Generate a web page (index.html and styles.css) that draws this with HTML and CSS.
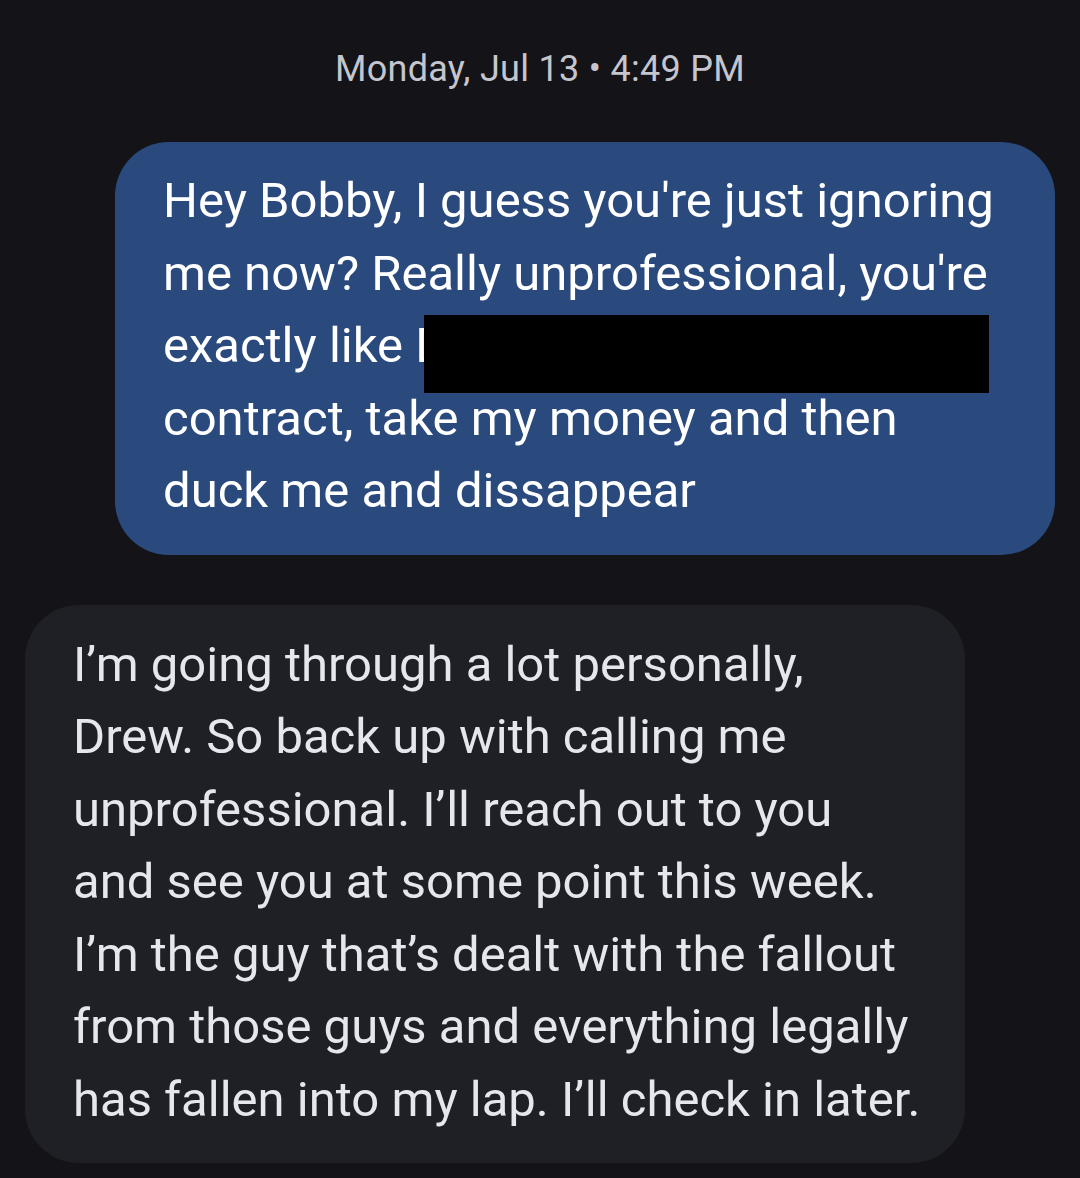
FILE: index.html
```html
<!DOCTYPE html>
<html lang="en">
<head>
    <meta charset="UTF-8">
    <meta name="viewport" content="width=device-width, initial-scale=1.0">
    <title>Messages</title>
    <link rel="stylesheet" href="styles.css">
</head>
<body>
    <div class="thread">
        <div class="timestamp">Monday, Jul 13 &bull; 4:49 PM</div>

        <div class="bubble sent">
            Hey Bobby, I guess you're just ignoring<br>
            me now? Really unprofessional, you're<br>
            exactly like D<br>
            contract, take my money and then<br>
            duck me and dissappear
            <span class="redact"></span>
        </div>

        <div class="bubble received">
            I’m going through a lot personally,<br>
            Drew. So back up with calling me<br>
            unprofessional. I’ll reach out to you<br>
            and see you at some point this week.<br>
            I’m the guy that’s dealt with the fallout<br>
            from those guys and everything legally<br>
            has fallen into my lap. I’ll check in later.
        </div>
    </div>
</body>
</html>
```

FILE: styles.css
```css
body {
    margin: 0;
    padding: 0;
    background-color: #131318;
    font-family: Roboto, "Noto Sans", sans-serif;
}

.thread {
    width: 1080px;
    height: 1178px;
    box-sizing: border-box;
    padding-top: 46px;
    overflow: hidden;
}

.timestamp {
    text-align: center;
    color: #c5c6cd;
    font-size: 36px;
    line-height: 46px;
    letter-spacing: 0.3px;
    margin-bottom: 50px;
}

.bubble {
    position: relative;
    width: 940px;
    box-sizing: border-box;
    padding: 23px 48px 27px 48px;
    border-radius: 54px;
    font-size: 49px;
    line-height: 72.5px;
    white-space: nowrap;
}

.sent {
    margin-left: 115px;
    background-color: #2a4a7e;
    color: #ffffff;
}

.received {
    margin-left: 25px;
    margin-top: 50px;
    background-color: #1f2025;
    color: #e6e7ec;
    padding-top: 24px;
    padding-bottom: 27px;
}

/* black box over the blanked-out name */
.redact {
    position: absolute;
    left: 309px;
    top: 173px;
    width: 565px;
    height: 78px;
    background-color: #000;
}
```
